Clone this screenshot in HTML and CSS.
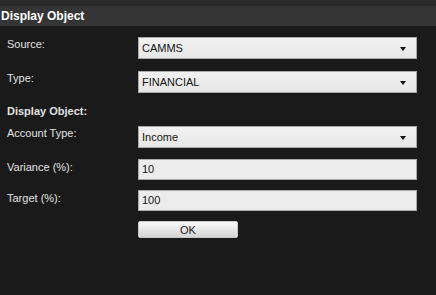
FILE: index.html
```html
<!DOCTYPE html>
<html lang="en">
<head>
    <meta charset="UTF-8">
    <title>Display Object</title>
    <link rel="stylesheet" href="styles.css">
</head>
<body>
<!-- 外层面板 -->
<div class="panel">
    <div class="top-strip"></div>
    <div class="title">Display Object</div>

    <div class="form">
        <div class="row row-source">
            <span class="label">Source:</span>
            <div class="select">CAMMS<span class="arrow"></span></div>
        </div>
        <div class="row row-type">
            <span class="label">Type:</span>
            <div class="select">FINANCIAL<span class="arrow"></span></div>
        </div>

        <div class="section">Display Object:</div>

        <div class="row row-account">
            <span class="label">Account Type:</span>
            <div class="select">Income<span class="arrow"></span></div>
        </div>
        <div class="row row-input">
            <span class="label label-input">Variance (%):</span>
            <div class="input">10</div>
        </div>
        <div class="row row-input">
            <span class="label label-input">Target (%):</span>
            <div class="input">100</div>
        </div>
        <div class="row row-button">
            <span></span>
            <a class="btn" href="javascript:;">OK</a>
        </div>
    </div>
</div>
</body>
</html>
```

FILE: styles.css
```css
* {
    margin: 0;
    padding: 0;
    box-sizing: border-box;
}

body {
    background-color: #1a1a1a;
    font-family: "Liberation Sans", Arial, sans-serif;
    font-size: 11px;
    color: #e2e2e2;
}

.panel {
    width: 436px;
    height: 295px;
    background-color: #1a1a1a;
}

/* 顶部深色条 */
.top-strip {
    height: 6px;
    background-color: #2b2b2b;
}

.title {
    height: 20px;
    line-height: 20px;
    padding-left: 1px;
    background-color: #353535;
    color: #ffffff;
    font-weight: bold;
    font-size: 12px;
}

.form {
    padding: 11px 0 0 7px;
}

.row {
    display: grid;
    grid-template-columns: 131px 279px;
    align-items: start;
}

.row-type {
    margin-top: 12px;
}

.section {
    margin-top: 10px;
    height: 16px;
    line-height: 16px;
    font-weight: bold;
}

.row-account {
    margin-top: 7px;
}

.row-input {
    margin-top: 11px;
}

.row-input + .row-input {
    margin-top: 10px;
}

.row-button {
    margin-top: 10px;
}

.label {
    line-height: 13px;
    padding-top: 1px;
}

.label-input {
    padding-top: 2px;
}

/* 下拉框 */
.select {
    position: relative;
    height: 22px;
    line-height: 20px;
    padding-left: 3px;
    border: 1px solid #a9a9a9;
    background: linear-gradient(#f2f2f2, #e6e6e6);
    color: #141414;
}

.arrow {
    position: absolute;
    right: 10px;
    top: 9px;
    width: 0;
    height: 0;
    border-left: 3px solid transparent;
    border-right: 3px solid transparent;
    border-top: 4px solid #111;
}

.input {
    height: 21px;
    line-height: 19px;
    padding-left: 3px;
    border: 1px solid #a9a9a9;
    background-color: #ececec;
    color: #141414;
}

.btn {
    display: block;
    width: 100px;
    height: 17px;
    line-height: 16px;
    text-align: center;
    color: #222;
    font-size: 11px;
    text-decoration: none;
    border-radius: 2px;
    background: linear-gradient(#fafafa, #d4d4d4);
    border: 1px solid #c8c8c8;
}
```
